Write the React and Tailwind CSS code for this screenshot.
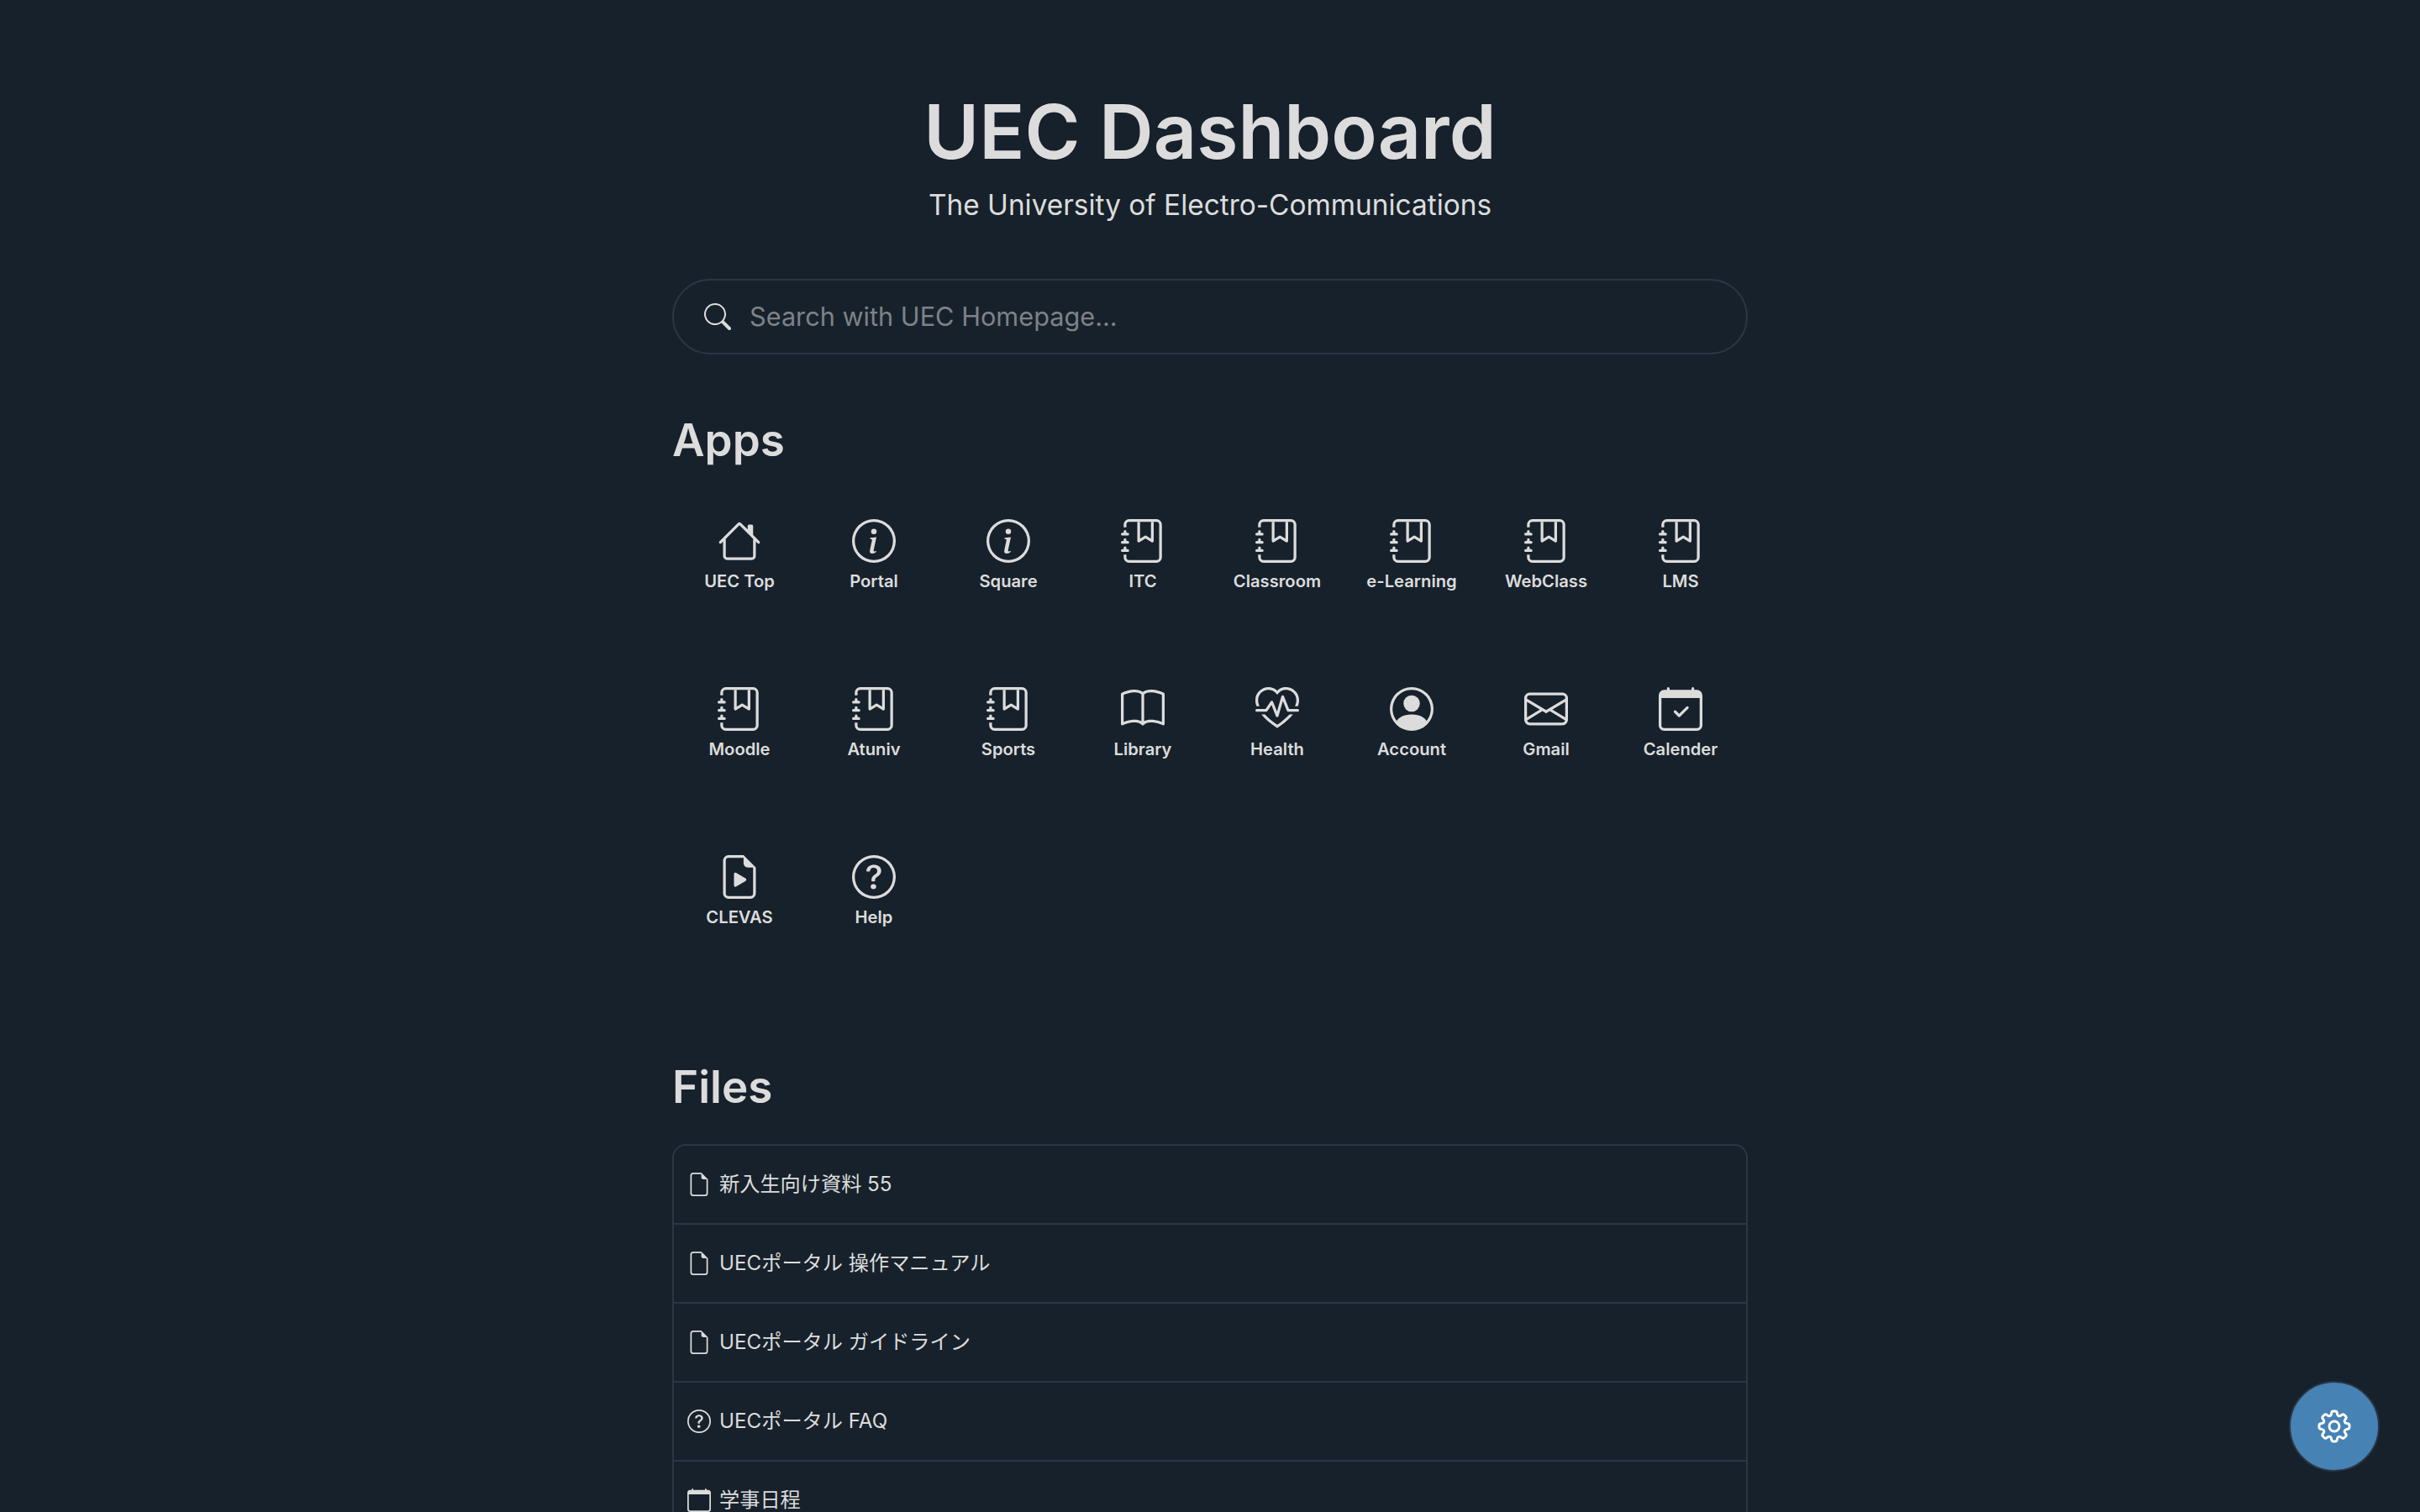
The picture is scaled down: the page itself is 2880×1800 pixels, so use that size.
import React from "react";
import { BsHouse, BsInfoCircle, BsJournalBookmark, BsBook, BsHeartPulse, BsPersonCircle, BsEnvelope, BsCalendarCheck, BsFileEarmarkPlay, BsQuestionCircle, BsSearch, BsFileEarmark, BsCalendar } from "react-icons/bs";
import { HiOutlineCog8Tooth } from "react-icons/hi2";

const apps = [
  [BsHouse, "UEC Top"], [BsInfoCircle, "Portal"], [BsInfoCircle, "Square"], [BsJournalBookmark, "ITC"],
  [BsJournalBookmark, "Classroom"], [BsJournalBookmark, "e-Learning"], [BsJournalBookmark, "WebClass"], [BsJournalBookmark, "LMS"],
  [BsJournalBookmark, "Moodle"], [BsJournalBookmark, "Atuniv"], [BsJournalBookmark, "Sports"], [BsBook, "Library"],
  [BsHeartPulse, "Health"], [BsPersonCircle, "Account"], [BsEnvelope, "Gmail"], [BsCalendarCheck, "Calender"],
  [BsFileEarmarkPlay, "CLEVAS"], [BsQuestionCircle, "Help"],
];

const files = [
  [BsFileEarmark, "新入生向け資料 55"],
  [BsFileEarmark, "UECポータル 操作マニュアル"],
  [BsFileEarmark, "UECポータル ガイドライン"],
  [BsQuestionCircle, "UECポータル FAQ"],
  [BsCalendar, "学事日程"],
];

export default function App() {
  return (
    <div className="relative h-screen overflow-hidden bg-[#17212b] text-[#dcdcdc] font-['Inter','Noto_Sans_CJK_JP',sans-serif]">
      <main className="mx-auto w-[1280px] pt-[105px]">
        <h1 className="text-center text-[89.6px] leading-[104px] font-semibold">UEC Dashboard</h1>
        <p className="mt-[11px] text-center text-[33.4px] leading-[48px]">The University of Electro-Communications</p>

        <div className="mt-[64px] flex h-[90px] items-center rounded-full border-2 border-[#2a3646] px-[36px]">
          <BsSearch className="h-[32px] w-[32px] shrink-0" />
          <span className="ml-[22px] text-[30.7px] text-[#7d8288]">Search with UEC Homepage...</span>
        </div>

        <h2 className="mt-[68px] text-[53px] leading-[68px] font-semibold">Apps</h2>

        <div className="mt-[60px] grid grid-cols-8">
          {apps.map(([Icon, label], i) => (
            <a key={i} className="flex h-[200px] flex-col items-center">
              <Icon className="h-[52px] w-[52px]" />
              <span className="mt-[7px] text-[20.2px] leading-[30px] font-semibold">{label}</span>
            </a>
          ))}
        </div>

        <h2 className="mt-[42px] text-[53px] leading-[68px] font-semibold">Files</h2>

        <ul className="mt-[34px] rounded-[16px] border-2 border-[#2a3646]">
          {files.map(([Icon, label], i) => (
            <li key={i} className="flex h-[94px] items-center gap-[10px] border-b-2 border-[#2a3646] pl-[16px]">
              <Icon className="h-[28px] w-[28px] shrink-0" />
              <span className="text-[24.2px] leading-[40px]">{label}</span>
            </li>
          ))}
        </ul>
      </main>

      <button className="absolute right-[48px] bottom-[48px] flex h-[108px] w-[108px] items-center justify-center rounded-full border-2 border-[#2a3646] bg-[#4682b4] text-white">
        <HiOutlineCog8Tooth className="h-[48px] w-[48px]" />
      </button>
    </div>
  );
}
